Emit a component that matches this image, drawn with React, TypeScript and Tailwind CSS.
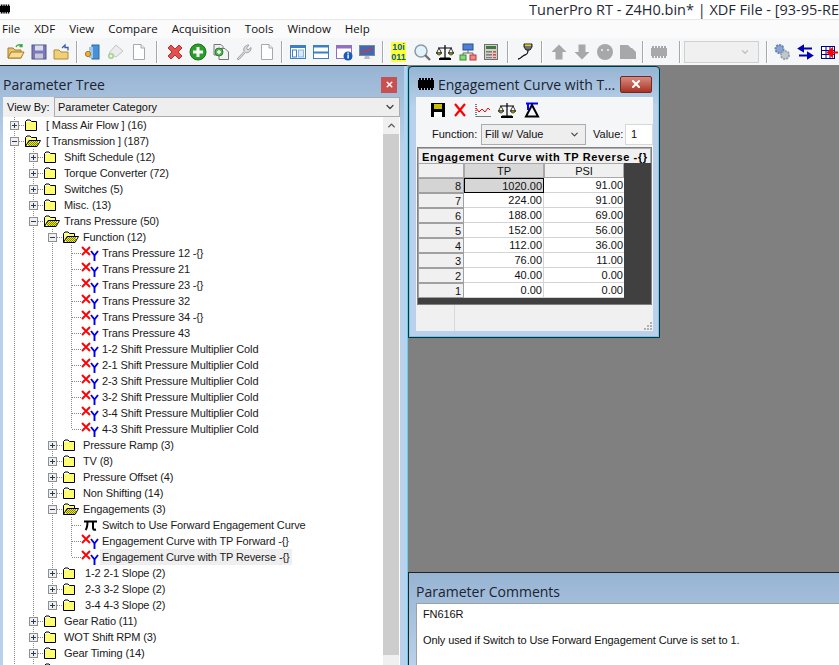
import { ReactNode } from "react";
import { ChevronDown, ChevronUp, X } from "lucide-react";

const segoe = { fontFamily: '"Open Sans", "Noto Sans", sans-serif' };

type Row = {
	level: number;
	kind: "closed" | "open" | "xy" | "pi";
	label: string;
	last?: boolean;
	selected?: boolean;
	pad?: number;
};

const rows: Row[] = [
	{ level: 0, kind: "closed", label: "[ Mass Air Flow ] (16)", pad: 1 },
	{ level: 0, kind: "open", label: "[ Transmission ] (187)", pad: 1 },
	{ level: 1, kind: "closed", label: "Shift Schedule (12)" },
	{ level: 1, kind: "closed", label: "Torque Converter (72)" },
	{ level: 1, kind: "closed", label: "Switches (5)" },
	{ level: 1, kind: "closed", label: "Misc. (13)" },
	{ level: 1, kind: "open", label: "Trans Pressure (50)" },
	{ level: 2, kind: "open", label: "Function (12)" },
	{ level: 3, kind: "xy", label: "Trans Pressure 12 -{}" },
	{ level: 3, kind: "xy", label: "Trans Pressure 21" },
	{ level: 3, kind: "xy", label: "Trans Pressure 23 -{}" },
	{ level: 3, kind: "xy", label: "Trans Pressure 32" },
	{ level: 3, kind: "xy", label: "Trans Pressure 34 -{}" },
	{ level: 3, kind: "xy", label: "Trans Pressure 43" },
	{ level: 3, kind: "xy", label: "1-2 Shift Pressure Multiplier Cold" },
	{ level: 3, kind: "xy", label: "2-1 Shift Pressure Multiplier Cold" },
	{ level: 3, kind: "xy", label: "2-3 Shift Pressure Multiplier Cold" },
	{ level: 3, kind: "xy", label: "3-2 Shift Pressure Multiplier Cold" },
	{ level: 3, kind: "xy", label: "3-4 Shift Pressure Multiplier Cold" },
	{ level: 3, kind: "xy", label: "4-3 Shift Pressure Multiplier Cold", last: true },
	{ level: 2, kind: "closed", label: "Pressure Ramp (3)" },
	{ level: 2, kind: "closed", label: "TV (8)" },
	{ level: 2, kind: "closed", label: "Pressure Offset (4)" },
	{ level: 2, kind: "closed", label: "Non Shifting (14)" },
	{ level: 2, kind: "open", label: "Engagements (3)" },
	{ level: 3, kind: "pi", label: "Switch to Use Forward Engagement Curve" },
	{ level: 3, kind: "xy", label: "Engagement Curve with TP Forward -{}" },
	{ level: 3, kind: "xy", label: "Engagement Curve with TP Reverse -{}", last: true, selected: true },
	{ level: 2, kind: "closed", label: "1-2 2-1 Slope (2)", pad: 2 },
	{ level: 2, kind: "closed", label: "2-3 3-2 Slope (2)", pad: 2 },
	{ level: 2, kind: "closed", label: "3-4 4-3 Slope (2)", last: true, pad: 2 },
	{ level: 1, kind: "closed", label: "Gear Ratio (11)" },
	{ level: 1, kind: "closed", label: "WOT Shift RPM (3)" },
	{ level: 1, kind: "closed", label: "Gear Timing (14)" },
	{ level: 1, kind: "closed", label: "Shift Solenoid Map (6)" },
];

const tableRows = [
	["8", "1020.00", "91.00"],
	["7", "224.00", "91.00"],
	["6", "188.00", "69.00"],
	["5", "152.00", "56.00"],
	["4", "112.00", "36.00"],
	["3", "76.00", "11.00"],
	["2", "40.00", "0.00"],
	["1", "0.00", "0.00"],
];

const Chip = ({ className = "", fill = "#000" }: { className?: string; fill?: string }) => (
	<svg width="16" height="12" viewBox="0 0 16 12" className={className}>
		<rect x="0" y="2" width="16" height="8" fill={fill} />
		{[1, 4, 7, 10, 13].map((x) => (
			<g key={x}>
				<rect x={x} y="0" width="2" height="2" fill={fill} />
				<rect x={x} y="10" width="2" height="2" fill={fill} />
			</g>
		))}
	</svg>
);

const Guide = () => (
	<svg width="19" height="16" className="shrink-0">
		<line x1="9.5" y1="0" x2="9.5" y2="16" stroke="#8a8a8a" strokeDasharray="1 1" />
	</svg>
);

const Connector = ({ box, open, last }: { box: boolean; open: boolean; last?: boolean }) => (
	<svg width="19" height="16" className="shrink-0">
		<line x1="9.5" y1="0" x2="9.5" y2={last ? 8 : 16} stroke="#8a8a8a" strokeDasharray="1 1" />
		<line x1="10" y1="8.5" x2="19" y2="8.5" stroke="#8a8a8a" strokeDasharray="1 1" />
		{box && (
			<>
				<rect x="5.5" y="4.5" width="8" height="8" fill="#f0f0f0" stroke="#8f8f8f" />
				<line x1="7" y1="8.5" x2="12" y2="8.5" stroke="#2a3a5a" />
				{!open && <line x1="9.5" y1="6" x2="9.5" y2="11" stroke="#2a3a5a" />}
			</>
		)}
	</svg>
);

// pixel dither like the old 16 colour folder bitmaps
const ditherPixels = (x0: number, y0: number, w: number, h: number, a: string, b: string) => {
	const out: ReactNode[] = [];
	for (let y = y0; y < y0 + h; y++) {
		for (let x = x0; x < x0 + w; x++) {
			out.push(<rect key={`${x}-${y}`} x={x} y={y} width="1" height="1" fill={(x + y) % 2 === 0 ? a : b} />);
		}
	}
	return out;
};

const FolderClosed = () => (
	<svg width="19" height="16" className="shrink-0">
		{ditherPixels(2, 5, 10, 8, "#ffff50", "#ffff90")}
		<path d="M1.5 13.5V4.5L3 3H6L7.5 4.5H12.5V13.5Z" fill="none" stroke="#000" />
	</svg>
);

const FolderOpen = () => (
	<svg width="19" height="16" className="shrink-0">
		<path d="M1.5 13.5V4.5L3 3H6L7.5 4.5H12.5V7.5" fill="#ffff90" stroke="#000" />
		{ditherPixels(4, 8, 10, 5, "#f0f000", "#808000")}
		<path d="M1.5 13.5L5 7.5H16.5L13 13.5Z" fill="none" stroke="#000" />
	</svg>
);

const XyIcon = () => (
	<svg width="19" height="16" className="shrink-0">
		<path d="M1 2L9 10M9 2L1 10" stroke="#ff0000" strokeWidth="1.9" />
		<path d="M10 6L13.5 10.5M17 6L13.5 10.5V16" stroke="#0000e8" strokeWidth="1.9" fill="none" />
	</svg>
);

const PiIcon = () => (
	<svg width="19" height="16" className="shrink-0">
		<path
			d="M3 4.5H16M6.5 4.5C6.5 9 6.5 11 4.5 13M12 4.5V11C12 12.5 13 13 15 12.5"
			stroke="#000"
			strokeWidth="2"
			fill="none"
		/>
	</svg>
);

const TreeRow = ({ row }: { row: Row }) => {
	const isLeaf = row.kind === "xy" || row.kind === "pi";
	return (
		<div className="flex items-center h-4 whitespace-nowrap">
			{Array.from({ length: row.level }).map((_, i) => (
				<Guide key={i} />
			))}
			<Connector box={!isLeaf} open={row.kind === "open"} last={row.last} />
			{row.kind === "closed" && <FolderClosed />}
			{row.kind === "open" && <FolderOpen />}
			{row.kind === "xy" && <XyIcon />}
			{row.kind === "pi" && <PiIcon />}
			<span
				className={`h-4 leading-4 px-[2px] text-[11px] tracking-[-0.13px] text-[#1a1a1a] ${row.selected ? "bg-[#efefef]" : ""}`}
				style={row.pad ? { marginLeft: row.pad } : undefined}
			>
				{row.label}
			</span>
		</div>
	);
};

const Sep = ({ w = 9 }: { w?: number }) => (
	<div className="flex justify-center shrink-0 h-[22px]" style={{ width: w }}>
		<div className="w-[2px] h-full bg-[#a8a8a8] border-r border-white" />
	</div>
);

const Slot = ({ children }: { children: ReactNode }) => (
	<div className="w-[23px] h-[22px] flex items-center justify-center shrink-0">{children}</div>
);

const Ic = ({ children }: { children: ReactNode }) => (
	<svg width="18" height="18" viewBox="0 0 18 18">
		{children}
	</svg>
);

const ScaleIcon = () => (
	<svg width="18" height="16" viewBox="0 0 18 16">
		<path d="M9 1V14M4 14H14M2 4H16" stroke="#000" strokeWidth="1.2" fill="none" />
		<path d="M3 4L0.5 9H5.5ZM15 4L12.5 9H17.5Z" fill="#fff" stroke="#000" strokeWidth="0.8" />
		<path d="M0.5 9C1.5 11.5 4.5 11.5 5.5 9ZM12.5 9C13.5 11.5 16.5 11.5 17.5 9Z" fill="#f2e000" stroke="#000" strokeWidth="0.8" />
		<rect x="3" y="14" width="12" height="2" fill="#000" />
	</svg>
);

const Toolbar = () => (
	<div className="flex items-center h-[27px] pl-[4px] bg-[#f5f6f7]">
		<Slot>
			<Ic>
				<path d="M1 15V5H6L8 7H14V15Z" fill="#e8c26c" stroke="#a87a24" />
				<path d="M1 15L4 9H17L14 15Z" fill="#f6dc94" stroke="#a87a24" />
				<path d="M9 4C10 1.5 13 1 15 3M15 1V3.5H12.5" stroke="#38a838" strokeWidth="1.3" fill="none" />
			</Ic>
		</Slot>
		<Slot>
			<Ic>
				<rect x="2" y="2" width="14" height="14" fill="#7a7ab8" stroke="#54548c" />
				<rect x="5" y="2.5" width="8" height="5" fill="#dcdcf0" />
				<rect x="5" y="10.5" width="8" height="5" fill="#c8c8d8" />
			</Ic>
		</Slot>
		<Slot>
			<Ic>
				<path d="M1 16V7H6L8 9H15V16Z" fill="#f0cf78" stroke="#b08a30" />
				<path d="M9 5L12 2L12 4.5H15V7.5" stroke="#3a5fa8" strokeWidth="1.3" fill="none" />
			</Ic>
		</Slot>
		<Sep w={8} />
		<Slot>
			<Ic>
				<rect x="8" y="2" width="7" height="14" fill="#4a90d8" stroke="#2a6aa8" />
				<rect x="5" y="4" width="4" height="11" fill="#9cc8ee" />
				<circle cx="4" cy="11" r="2.6" fill="#f0b030" stroke="#b07818" />
			</Ic>
		</Slot>
		<Slot>
			<Ic>
				<path d="M9 2L16 8L9 14L2 10Z" fill="#ececec" stroke="#c4c4c4" />
				<circle cx="4" cy="13" r="3" fill="#a6d08c" />
				<path d="M2.5 13H5.5M4 11.5V14.5" stroke="#fff" />
			</Ic>
		</Slot>
		<Slot>
			<Ic>
				<path d="M3.5 1.5H11L14.5 5V16.5H3.5Z" fill="#fff" stroke="#a8a8a8" />
				<path d="M11 1.5V5H14.5" fill="#eee" stroke="#a8a8a8" />
			</Ic>
		</Slot>
		<Sep w={13} />
		<Slot>
			<Ic>
				<path d="M2 5L5 2L9 6L13 2L16 5L12 9L16 13L13 16L9 12L5 16L2 13L6 9Z" fill="#e25050" stroke="#c03030" />
			</Ic>
		</Slot>
		<Slot>
			<Ic>
				<circle cx="9" cy="9" r="8" fill="#28a028" stroke="#1a701a" />
				<path d="M4 9H14M9 4V14" stroke="#fff" strokeWidth="3" />
			</Ic>
		</Slot>
		<Slot>
			<Ic>
				<path d="M2 1.5H9L11 3.5V12H2Z" fill="#eee" stroke="#777" />
				<path d="M7 5.5H13L16.5 9V16.5H7Z" fill="#f4f4f4" stroke="#777" />
				<circle cx="7" cy="9" r="4" fill="#58b058" stroke="#2a802a" />
				<path d="M5 9H9M7 7V11" stroke="#fff" strokeWidth="1.4" />
			</Ic>
		</Slot>
		<Slot>
			<Ic>
				<path d="M2 16L9 8.5C8 5 10 2 14 2L11.5 5L13 7L16 4.5C16.5 8 13.5 10.5 10.5 9.5L4 16.5Z" fill="#dcdcdc" stroke="#a0a0a0" />
			</Ic>
		</Slot>
		<Slot>
			<Ic>
				<path d="M3.5 1.5H11L14.5 5V16.5H3.5Z" fill="#fff" stroke="#a8a8a8" />
				<path d="M11 1.5V5H14.5" fill="#eee" stroke="#a8a8a8" />
			</Ic>
		</Slot>
		<Sep w={8} />
		<Slot>
			<Ic>
				<rect x="1.5" y="2.5" width="15" height="13" fill="#fff" stroke="#3a7fc8" />
				<rect x="1.5" y="2.5" width="15" height="2.5" fill="#3a7fc8" />
				<rect x="3.5" y="7" width="4" height="7" fill="#fff" stroke="#3a7fc8" />
				<rect x="9.5" y="7" width="5" height="7" fill="#dbe8f6" stroke="#8ab4e0" />
			</Ic>
		</Slot>
		<Slot>
			<Ic>
				<rect x="1.5" y="2.5" width="15" height="13" fill="#fff" stroke="#3a7fc8" />
				<rect x="1.5" y="2.5" width="15" height="2" fill="#3a7fc8" />
				<rect x="1.5" y="8.5" width="15" height="2" fill="#3a7fc8" />
			</Ic>
		</Slot>
		<Slot>
			<Ic>
				<rect x="1.5" y="2.5" width="15" height="13" fill="#fff" stroke="#9070c0" />
				<rect x="1.5" y="2.5" width="15" height="3" fill="#9070c0" />
				<circle cx="13" cy="13" r="4.5" fill="#1a5cb8" />
				<rect x="12.4" y="11.5" width="1.4" height="4" fill="#fff" />
				<rect x="12.4" y="9.5" width="1.4" height="1.4" fill="#fff" />
			</Ic>
		</Slot>
		<Slot>
			<Ic>
				<rect x="1.5" y="2.5" width="15" height="10" fill="#3a6ab8" stroke="#808898" />
				<path d="M3 10L7 7L9 8.5L14 5" stroke="#e83030" strokeWidth="1.4" fill="none" />
				<path d="M7 13H11L12 16H6Z" fill="#b8bcc4" />
			</Ic>
		</Slot>
		<Sep w={9} />
		<Slot>
			<div
				className="w-[15px] h-[20px] bg-[#ffff30] text-[9px] leading-[10px] font-bold text-[#00609a] text-center"
				style={{ fontFamily: '"Liberation Sans", sans-serif' }}
			>
				10i
				<br />
				011
			</div>
		</Slot>
		<Slot>
			<Ic>
				<circle cx="8" cy="8" r="6" fill="#e4f2fc" stroke="#8a9aa8" strokeWidth="1.5" />
				<path d="M12 12L17 17" stroke="#707070" strokeWidth="2.4" />
			</Ic>
		</Slot>
		<Slot>
			<ScaleIcon />
		</Slot>
		<Slot>
			<Ic>
				<rect x="4" y="1" width="10" height="6" fill="#4a80d8" stroke="#2a508c" />
				<path d="M9 7V10M4 12V10H14V12" stroke="#666" fill="none" />
				<rect x="1" y="12" width="6" height="5" fill="#88d878" stroke="#3c8a30" />
				<rect x="11" y="12" width="6" height="5" fill="#f08a8a" stroke="#b83838" />
			</Ic>
		</Slot>
		<Slot>
			<Ic>
				<rect x="2.5" y="1.5" width="13" height="15" fill="#d4d0c8" stroke="#707070" />
				<rect x="4" y="3" width="10" height="3" fill="#3c7c3c" />
				<rect x="4" y="8" width="6" height="1.6" fill="#808080" />
				<rect x="4" y="11" width="6" height="1.6" fill="#808080" />
				<rect x="4" y="14" width="6" height="1.2" fill="#808080" />
				<rect x="11" y="8" width="3" height="1.6" fill="#c85050" />
				<rect x="11" y="11" width="3" height="1.6" fill="#c85050" />
				<rect x="11" y="14" width="3" height="1.2" fill="#c85050" />
			</Ic>
		</Slot>
		<Sep w={12} />
		<Slot>
			<Ic>
				<path d="M7 1H15V4L13 7H9L7 4Z" fill="#707070" stroke="#222" />
				<rect x="8" y="1.5" width="6" height="1.5" fill="#e8d020" />
				<path d="M11 7C11 12 9 11 6 13C4 14 4 16 1 16" stroke="#111" strokeWidth="1.3" fill="none" />
			</Ic>
		</Slot>
		<Sep w={10} />
		<Slot>
			<Ic>
				<path d="M9 1.5L16.5 9H12.5V16.5H5.5V9H1.5Z" fill="#a8a8a8" />
			</Ic>
		</Slot>
		<Slot>
			<Ic>
				<path d="M9 16.5L16.5 9H12.5V1.5H5.5V9H1.5Z" fill="#a8a8a8" />
			</Ic>
		</Slot>
		<Slot>
			<Ic>
				<circle cx="9" cy="9" r="8" fill="#a8a8a8" />
				<rect x="5" y="6" width="2" height="2" fill="#e0e0e0" />
				<rect x="11" y="6" width="2" height="2" fill="#e0e0e0" />
			</Ic>
		</Slot>
		<Slot>
			<Ic>
				<path d="M1 2H9L12 5V16H1Z" fill="#a8a8a8" />
				<path d="M9 5H13L17 9V16H9Z" fill="#a8a8a8" />
			</Ic>
		</Slot>
		<Sep w={8} />
		<Slot>
			<Chip fill="#a8a8a8" />
		</Slot>
		<div className="w-[7px] shrink-0" />
		<Sep w={6} />
		<div className="w-[75px] h-[22px] border border-[#d0d0d0] bg-[#f0f0f0] flex items-center justify-end pr-[8px] shrink-0 ml-[1px] mr-[5px]">
			<ChevronDown size={10} strokeWidth={3} className="text-[#c0c0c0]" />
		</div>
		<Sep w={6} />
		<Slot>
			<Ic>
				<circle cx="6.5" cy="6" r="4" fill="#8aa4d0" stroke="#6484b8" strokeDasharray="2 1" strokeWidth="2" />
				<circle cx="12" cy="12" r="4" fill="#c0c8d0" stroke="#98a0a8" strokeDasharray="2 1" strokeWidth="2" />
			</Ic>
		</Slot>
		<div className="w-[1px] shrink-0" />
		<Slot>
			<Ic>
				<path d="M2 5.5H15M2 5.5L6 3V8Z" stroke="#0000b0" strokeWidth="2" fill="#0000b0" />
				<path d="M2 12.5H15M15 12.5L11 10V15Z" stroke="#0000b0" strokeWidth="2" fill="#0000b0" />
			</Ic>
		</Slot>
		<Slot>
			<Ic>
				<rect x="1.5" y="3.5" width="13" height="12" fill="#fff" stroke="#000090" />
				<path d="M1.5 7.5H14.5M1.5 11.5H14.5M6 3.5V15.5M10 3.5V15.5" stroke="#000090" />
				<path d="M8 9.5H18M8 9.5L12 6V13Z" stroke="#ff0000" strokeWidth="2" fill="#ff0000" />
			</Ic>
		</Slot>
	</div>
);

const Menu = () => (
	<div className="flex items-center h-[19px] bg-[#fbfbfb] text-[11.5px] text-[#111] border-t border-[#e8e8e8]" style={segoe}>
		<span className="ml-[2px]">File</span>
		<span className="ml-[14px]">XDF</span>
		<span className="ml-[14px]">View</span>
		<span className="ml-[14px]">Compare</span>
		<span className="ml-[14px]">Acquisition</span>
		<span className="ml-[14px]">Tools</span>
		<span className="ml-[14px]">Window</span>
		<span className="ml-[14px]">Help</span>
	</div>
);

const ParameterTree = () => (
	<div className="w-[404px] shrink-0 flex flex-col h-full bg-gradient-to-b from-[#97b4d3] to-[#b9d1ea] to-[80px] border-t border-[#222] overflow-hidden">
		<div className="flex items-center justify-between h-[31px] pt-[6px] pl-[3px] pr-[7px] shrink-0">
			<span className="text-[14px] text-[#1c2430]" style={segoe}>
				Parameter Tree
			</span>
			<div className="w-[16px] h-[16px] bg-[#c75050] flex items-center justify-center">
				<X size={9} strokeWidth={4} className="text-white" />
			</div>
		</div>
		<div className="ml-[3px] mr-[4px] flex-1 min-h-0 flex flex-col bg-white">
			<div className="flex items-center h-[20px] bg-[#f0f0f0] shrink-0">
				<span className="w-[51px] pl-[4px] text-[11px] text-[#111] whitespace-nowrap">View By:</span>
				<div className="flex-1 h-[20px] border border-[#acacac] bg-[#eeeeee] flex items-center justify-between pl-[3px] pr-[3px] text-[11px] text-[#111]">
					Parameter Category
					<ChevronDown size={12} strokeWidth={2.5} className="text-[#444]" />
				</div>
			</div>
			<div className="flex flex-1 min-h-0">
				<div className="flex-1 overflow-hidden pl-[2px]">
					{rows.map((row) => (
						<TreeRow key={row.label} row={row} />
					))}
				</div>
				<div className="w-[16px] shrink-0 mr-[1px] flex flex-col bg-[#f0f0f0]">
					<div className="h-[17px] flex items-center justify-center shrink-0">
						<ChevronUp size={11} strokeWidth={3} className="text-[#555]" />
					</div>
					<div className="h-[521px] bg-[#cdcdcd] shrink-0" />
				</div>
			</div>
		</div>
	</div>
);

const EngagementWindow = () => (
	<div className="absolute left-0 top-[1px] w-[252px] h-[272px] bg-gradient-to-b from-[#97b4d3] to-[#b9d1ea] to-[40px] border border-[#1f2a33] rounded-t-[4px] flex flex-col shadow-[inset_0_0_0_1px_#5fd0f0]">
		<div className="flex items-center h-[30px] pl-[9px] pr-[7px] shrink-0 pt-[4px]">
			<Chip className="shrink-0" />
			<span className="ml-[4px] flex-1 text-[14px] text-[#1c2430] whitespace-nowrap" style={segoe}>
				Engagement Curve with T...
			</span>
			<div className="w-[32px] h-[17px] rounded-[2px] bg-gradient-to-b from-[#d88a80] to-[#a83020] border border-[#6c2c20] flex items-center justify-center">
				<X size={12} strokeWidth={4} className="text-white" />
			</div>
		</div>
		<div className="ml-[7px] mr-[6px] flex-1 flex flex-col min-h-0 bg-[#f5f6f7]">
			<div className="flex items-center gap-[7px] h-[25px] pl-[14px] shrink-0">
				<svg width="16" height="16" viewBox="0 0 16 16">
					<rect x="1" y="1" width="14" height="14" fill="#000" />
					<rect x="4" y="2" width="8" height="5" fill="#c8c000" />
					<rect x="4" y="10" width="8" height="5" fill="#fff" />
				</svg>
				<svg width="14" height="16" viewBox="0 0 14 16">
					<path d="M2 2L12 14M12 2L2 14" stroke="#ff0000" strokeWidth="2.2" />
				</svg>
				<svg width="16" height="16" viewBox="0 0 16 16" className="ml-[1px]">
					<path d="M1 2V14.5H16" stroke="#000" strokeDasharray="1 1" fill="none" />
					<path d="M1 6L4 10L7 7L10 10L13 6L15 8" stroke="#ff0000" fill="none" />
				</svg>
				<ScaleIcon />
				<svg width="16" height="16" viewBox="0 0 16 16" className="ml-[1px]">
					<path d="M2 1.5H14" stroke="#0000ff" strokeWidth="2" />
					<path d="M8 3L14 14.5H2Z" fill="none" stroke="#000" strokeWidth="2" />
					<path d="M4 2V8" stroke="#0000ff" strokeWidth="2" />
				</svg>
			</div>
			<div className="flex items-center h-[22px] pl-[16px] shrink-0 text-[11px] text-[#111] mt-[1px]">
				<span className="w-[44px]">Function:</span>
				<div className="ml-[5px] w-[105px] h-[21px] border border-[#acacac] bg-[#eeeeee] flex items-center justify-between pl-[3px] pr-[5px]">
					Fill w/ Value
					<ChevronDown size={11} strokeWidth={2.5} className="text-[#444]" />
				</div>
				<span className="ml-[7px] w-[30px]">Value:</span>
				<div className="ml-[2px] flex-1 h-[21px] bg-white border border-[#d8d8d8] pl-[5px] leading-[19px]">1</div>
			</div>
			<div className="mx-[1px] mt-[2px] h-[158px] shrink-0 border border-[#808080] bg-[#404040] overflow-hidden">
				<div className="h-[15px] bg-[#f0f0f0] border border-[#b0b0b0] border-b-0 text-[11px] leading-[16px] font-bold text-black pl-[3px] tracking-[0.62px] whitespace-nowrap overflow-hidden">
					Engagement Curve with TP Reverse -{"{}"}
				</div>
				<div className="flex h-[15px] text-[11px] text-[#111] bg-[#d4d4d4] w-[206px]">
					<div className="w-[46px] bg-[#f0f0f0] border border-[#a8a8a8]" />
					<div className="w-[80px] bg-[#d8d8d8] border border-[#a8a8a8] text-center leading-[15px]">TP</div>
					<div className="w-[80px] bg-[#f0f0f0] border border-[#a8a8a8] text-center leading-[15px]">PSI</div>
				</div>
				{tableRows.map(([n, tp, psi], i) => (
					<div key={n} className="flex h-[15px] text-[11px] text-[#111] leading-[14px] bg-[#d4d4d4] w-[206px]">
						<div className={`w-[46px] border border-[#a0a0a0] text-right pr-[2px] ${i === 0 ? "bg-[#d4d4d4]" : "bg-[#f0f0f0]"}`}>{n}</div>
						<div className={`w-[80px] text-right pr-[1px] ${i === 0 ? "bg-[#d6d6d6] border border-black" : "bg-white border-b border-r border-[#d4d4d4]"}`}>{tp}</div>
						<div className="w-[80px] bg-white text-right pr-[1px] border-b border-[#d4d4d4]">{psi}</div>
					</div>
				))}
			</div>
			<div className="flex-1 flex items-stretch bg-[#f0f0f0] relative">
				<div className="w-[39px] h-full border-r border-[#d8d8d8]" />
				<div className="absolute right-[1px] bottom-[1px] grid grid-cols-3 gap-[1px]">
					{[0, 1, 2, 3, 4, 5, 6, 7, 8].map((d) => (
						<div key={d} className={`w-[2px] h-[2px] ${d === 0 || d === 1 || d === 3 ? "bg-transparent" : "bg-[#b0b0b0]"}`} />
					))}
				</div>
			</div>
		</div>
		<div className="h-[6px] shrink-0" />
	</div>
);

const Comments = () => (
	<div className="h-[93px] shrink-0 bg-gradient-to-b from-[#97b4d3] to-[#b9d1ea] border-t border-[#222] border-l flex flex-col">
		<div className="h-[30px] flex items-center pl-[7px] pt-[6px] shrink-0 text-[14px] text-[#1c2430]" style={segoe}>
			Parameter Comments
		</div>
		<div className="flex-1 ml-[7px] bg-white border-t border-l border-[#a0a0a0] pl-[6px] pt-[4px] text-[11px] leading-[13px] tracking-[-0.1px] text-[#111]">
			<div>FN616R</div>
			<div className="h-[13px]" />
			<div>Only used if Switch to Use Forward Engagement Curve is set to 1.</div>
		</div>
	</div>
);

export default function App() {
	return (
		<div className="w-[839px] h-[665px] overflow-hidden flex flex-col bg-white" style={{ fontFamily: '"Liberation Sans", Arial, sans-serif' }}>
			<div className="h-[19px] shrink-0 flex items-center bg-white">
				<Chip className="-mt-[2px] -ml-[2px]" />
				<span className="ml-[519px] text-[14.5px] text-[#1f2933] whitespace-nowrap" style={segoe}>
					TunerPro RT - Z4H0.bin* | XDF File - [93-95-RE
				</span>
			</div>
			<Menu />
			<Toolbar />
			<div className="flex flex-1 min-h-0">
				<ParameterTree />
				<div className="w-[4px] shrink-0 bg-[#b9d1ea] border-t border-[#222] border-r border-r-[#5fd0f0]" />
				<div className="flex-1 min-w-0 flex flex-col">
					<div className="flex-1 bg-[#808080] relative">
						<EngagementWindow />
					</div>
					<Comments />
				</div>
			</div>
		</div>
	);
}
